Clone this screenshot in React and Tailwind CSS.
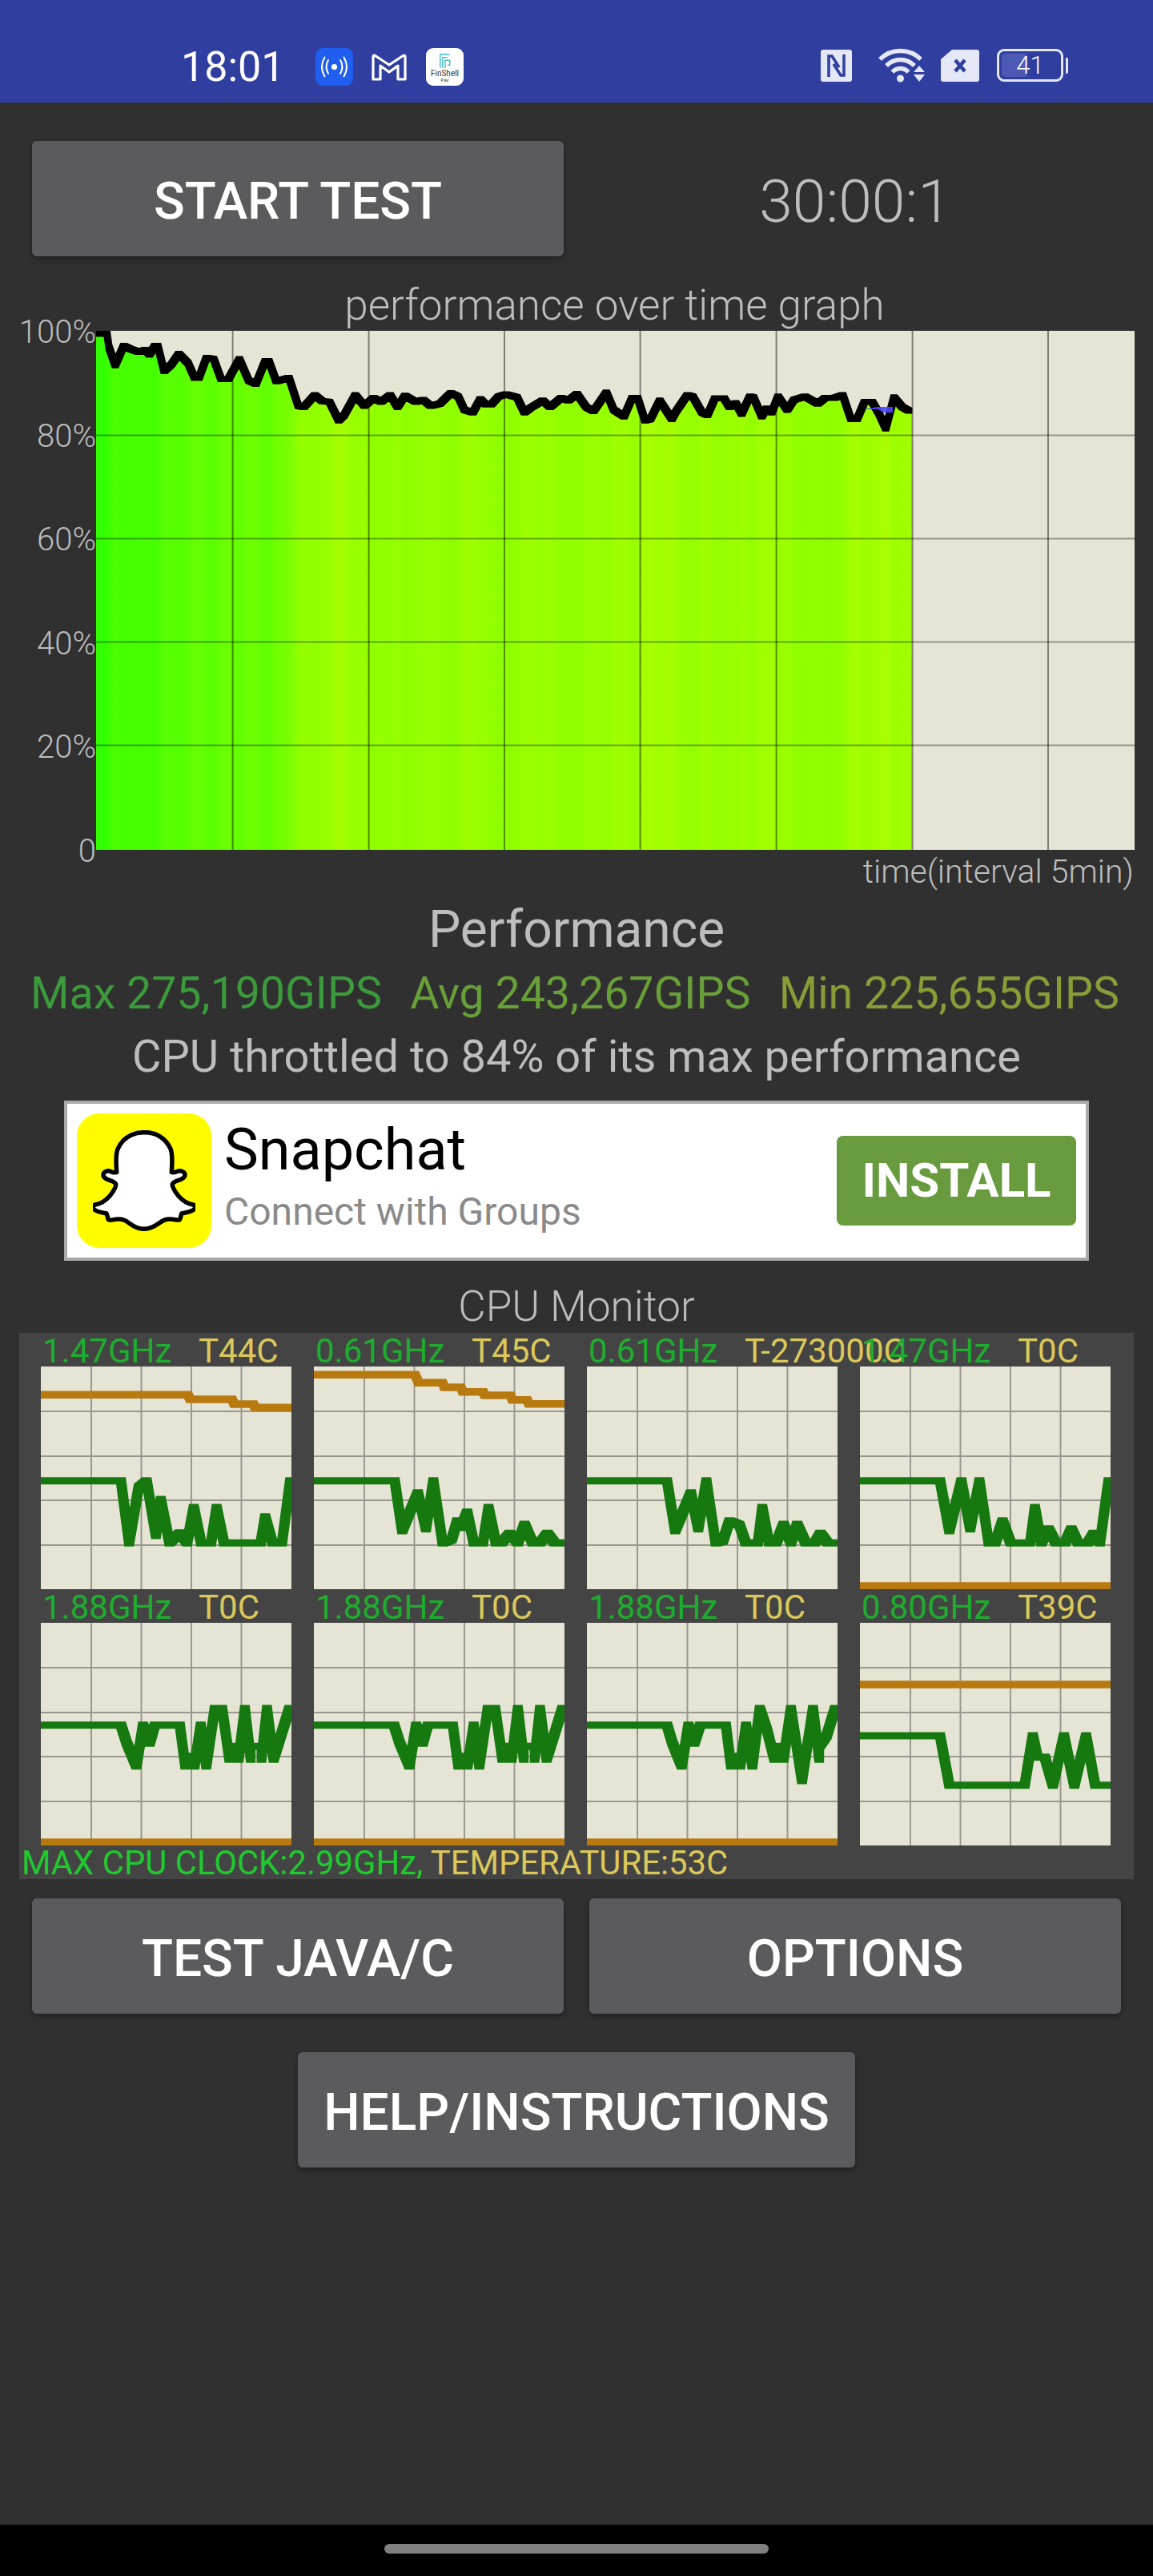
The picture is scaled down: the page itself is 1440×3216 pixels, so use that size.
import React from 'react';
import { FaSnapchatGhost } from 'react-icons/fa';

// performance curve traced off the graph (x in zoomed px, y in zoomed px)
const curveLeft = [[260,110],[290,110],[295,160],[312,228],[335,155],[355,168],[375,178],[395,170],[405,188],[420,155],[428,155],[445,250],[465,225],[485,185],[510,220],[528,275],[540,275],[560,200],[580,205],[600,280],[620,280],[650,205],[675,285],[695,298],[720,212],[730,212],[750,288],[785,275],[810,380],[825,385],[855,340],[875,362],[895,365],[920,435],[935,415],[965,340],[990,380],[1015,350],[1035,365],[1060,340],[1080,385],[1100,342],[1130,365],[1150,358],[1170,380],[1195,372],[1225,332],[1245,345],[1262,395],[1285,405],[1305,355],[1320,375],[1335,375],[1355,345],[1375,337],[1405,348],[1425,405],[1445,385],[1475,360],[1495,385],[1525,350],[1545,360]];
const curveRight = [[0,335],[25,385],[45,400],[80,330],[100,395],[128,420],[150,350],[165,350],[185,435],[200,430],[225,360],[258,430],[270,400],[300,340],[315,345],[340,405],[355,415],[375,352],[400,352],[415,385],[432,370],[448,410],[470,345],[480,348],[503,420],[515,390],[530,405],[547,345],[572,395],[590,358],[620,345],[655,372],[675,350],[700,350],[723,340],[745,430],[762,430],[782,365],[803,365],[820,405],[840,465],[862,348],[885,385],[903,398]];

const curve = [
  ...curveLeft.map(([x, y]) => [x / 2.178 - 119.4, y / 3 - 33]),
  ...curveRight.map(([x, y]) => [x / 2.178 + 600.6, y / 3 - 33]),
];

// the app paints with a rectangular brush, so sweep it along each segment
const brush = (pts, hx, hy) =>
  pts.slice(1).map(([x2, y2], i) => {
    const [x1, y1] = pts[i];
    const p = y2 <= y1
      ? [[x1 - hx, y1 - hy], [x2 - hx, y2 - hy], [x2 + hx, y2 - hy], [x2 + hx, y2 + hy], [x1 + hx, y1 + hy], [x1 - hx, y1 + hy]]
      : [[x1 - hx, y1 - hy], [x1 + hx, y1 - hy], [x2 + hx, y2 - hy], [x2 + hx, y2 + hy], [x2 - hx, y2 + hy], [x1 - hx, y1 + hy]];
    return 'M' + p.map((q) => q[0].toFixed(1) + ' ' + q[1].toFixed(1)).join('L') + 'Z';
  }).join('');

// stripes follow the curve, softened a little against the neighbours
const stripeColor = (i) => {
  const near = curve.slice(Math.max(0, i - 2), i + 3);
  const avg = near.reduce((sum, p) => sum + p[1], 0) / near.length;
  const y = avg * 0.55 + curve[i][1] * 0.45;
  const perf = 100 - (y - 1) / 6.48;
  const r = Math.min(200, Math.round(40 + (100 - perf) * 8));
  return `rgb(${r},255,0)`;
};

const FILL_END = 1019;

const PerfGraph = () => (
  <svg viewBox="0 0 1297 648" className="block h-[648px] w-[1297px] bg-[#e6e5d5]">
    <defs>
      <linearGradient id="stripes" gradientUnits="userSpaceOnUse" x1="0" y1="0" x2={FILL_END} y2="0">
        {curve.map(([x], i) => (
          <stop key={i} offset={Math.max(0, x / FILL_END)} stopColor={stripeColor(i)} />
        ))}
      </linearGradient>
    </defs>
    <path
      fill="url(#stripes)"
      d={'M0 648L0 0L' + curve.map(([x, y]) => x.toFixed(1) + ' ' + y.toFixed(1)).join('L') + `L${FILL_END} ${curve[curve.length - 1][1]}L${FILL_END} 648Z`}
    />
    {[170.6, 340.6, 510, 679.6, 849.6, 1019.6, 1189].map((x) => (
      <line key={x} x1={x} x2={x} y1="0" y2="648" stroke="#000" strokeOpacity="0.45" strokeWidth="2" />
    ))}
    {[130.6, 259.6, 388.6, 517.6].map((y) => (
      <line key={y} x1="0" x2="1297" y1={y} y2={y} stroke="#000" strokeOpacity="0.35" strokeWidth="2" />
    ))}
    <path d={brush(curve, 4.2, 3.8)} fill="#000" />
    <path d="M958 98H976L984 102H995V95H976Z" fill="#4a4aff" fillOpacity="0.9" />
  </svg>
);

// CPU plots, traced in zoomed px relative to the plot corner
const shift = (pts, x0) => pts.map(([x, y]) => [(x - x0) / 2.178, (y - 197) / 3]);

const row2a = [[112,580],[330,580],[345,645],[372,733],[390,580],[408,648],[422,580],[490,580],[505,733],[505,697],[530,697],[530,733],[547,580],[562,733],[585,518],[605,518],[625,708],[625,660],[650,660],[650,708],[667,518],[683,708],[683,660],[712,660],[712,708],[727,518],[745,708],[765,620],[788,518]];
const BOTTOM_TEMP = [[0, 274], [313, 274]];

const cpus = [
  {
    freq: '1.47GHz', temp: 'T44C',
    green: shift([[112,625],[330,625],[352,858],[378,650],[400,625],[425,830],[438,695],[462,858],[490,820],[510,858],[528,725],[548,858],[575,858],[590,725],[610,858],[710,858],[722,760],[742,858],[768,858],[790,625]], 112),
    orange: shift([[112,303],[512,303],[518,320],[632,320],[638,338],[690,338],[695,351],[795,351]], 112),
  },
  {
    freq: '0.61GHz', temp: 'T45C',
    green: shift([[855,625],[1075,625],[1095,812],[1138,670],[1160,805],[1180,625],[1205,858],[1230,845],[1245,775],[1255,800],[1272,742],[1290,858],[1315,858],[1330,725],[1350,858],[1365,858],[1388,822],[1410,858],[1428,788],[1450,858],[1470,858],[1490,822],[1510,858],[1538,858]], 855),
    orange: shift([[855,228],[1130,228],[1140,258],[1205,258],[1210,275],[1255,275],[1260,292],[1315,292],[1320,305],[1390,305],[1395,322],[1435,322],[1440,337],[1538,337]], 855),
  },
  {
    freq: '0.61GHz', temp: 'T-273000C',
    green: shift([[30,625],[248,625],[270,812],[313,670],[333,805],[355,625],[380,858],[400,850],[418,775],[445,790],[462,858],[495,858],[507,725],[525,858],[545,858],[565,788],[585,858],[602,788],[625,858],[650,858],[665,822],[685,858],[712,858]], 30),
    orange: null,
  },
  {
    freq: '1.47GHz', temp: 'T0C',
    green: shift([[772,625],[990,625],[1015,812],[1048,625],[1072,805],[1097,625],[1122,858],[1140,858],[1160,775],[1182,858],[1235,858],[1248,725],[1265,858],[1285,805],[1305,858],[1330,858],[1347,805],[1365,858],[1392,858],[1408,822],[1425,858],[1448,625]], 772),
    orange: BOTTOM_TEMP,
  },
  { freq: '1.88GHz', temp: 'T0C', green: shift(row2a, 112), orange: BOTTOM_TEMP },
  { freq: '1.88GHz', temp: 'T0C', green: shift(row2a, 112), orange: BOTTOM_TEMP },
  {
    freq: '1.88GHz', temp: 'T0C',
    green: shift([[30,580],[248,580],[262,645],[288,733],[306,580],[322,648],[338,580],[408,580],[422,733],[422,697],[447,697],[447,733],[463,580],[480,733],[500,518],[520,600],[540,708],[540,660],[565,660],[565,708],[585,518],[615,788],[645,518],[662,708],[662,660],[682,620],[705,518]], 30),
    orange: BOTTOM_TEMP,
  },
  {
    freq: '0.80GHz', temp: 'T39C',
    green: shift([[772,620],[990,620],[1015,805],[1220,805],[1242,620],[1255,700],[1275,700],[1297,805],[1327,620],[1355,805],[1387,620],[1412,805],[1455,805]], 772),
    orange: [[0, 77], [313, 77]],
  },
];

const CpuCell = ({ freq, temp, green, orange }) => (
  <div>
    <div className="flex h-[42px] items-center whitespace-nowrap pt-[3px] text-[42px] leading-[42px]">
      <span className="ml-[2px] w-[195px] shrink-0 text-[#1ead2e]">{freq}</span>
      <span className="text-[#dcc85a]">{temp}</span>
    </div>
    <svg viewBox="0 0 313 278" className="block h-[278px] w-[313px] bg-[#e6e5d5]">
      {[63, 125.5, 188, 250.5].map((x) => (
        <line key={x} x1={x} x2={x} y1="0" y2="278" stroke="#98988f" strokeWidth="2" />
      ))}
      {[56, 112, 167, 223].map((y) => (
        <line key={y} x1="0" x2="313" y1={y} y2={y} stroke="#98988f" strokeWidth="2" />
      ))}
      {orange && <path d={brush(orange, 4.8, 4.8)} fill="#b8790f" />}
      <path d={brush(green, 6, 4.5)} fill="#16790f" />
    </svg>
  </div>
);

const ActionButton = ({ label, className }) => (
  <button className={'h-[144px] rounded-[6px] bg-[#5b5b5d] pt-[7px] text-[64px] font-medium leading-none text-white shadow-[0_3px_6px_rgba(0,0,0,0.35)] ' + className}>
    {label}
  </button>
);

const StatusBar = () => (
  <div className="flex h-[128px] items-start justify-between bg-[#303f9f] pl-[226px] pr-[106px] pt-[60px]">
    <div className="flex items-center">
      <span className="w-[168px] text-[52px] leading-[47px] text-white">18:01</span>
      <svg viewBox="0 0 47 47" className="h-[47px] w-[47px]">
        <rect width="47" height="47" rx="9" fill="#1f5eef" />
        <circle cx="23.5" cy="23.5" r="3.6" fill="#fff" />
        <path d="M16 15q-5 8.500 0 17M31 15q5 8.500 0 17M11.500 11.500q-7 12 0 24M35.500 11.500q7 12 0 24" fill="none" stroke="#fff" strokeWidth="2" strokeLinecap="round" />
      </svg>
      <svg viewBox="0 0 44 36" className="ml-[23px] h-[36px] w-[44px]">
        <path d="M2 33V5q0-2.500 2.500-1.500L22 15 39.500 3.500Q42 2.500 42 5v28H33V16L22 24 11 16v17Z" fill="none" stroke="#fff" strokeWidth="3.200" strokeLinejoin="round" />
      </svg>
      <div className="ml-[24px] flex h-[47px] w-[47px] flex-col items-center rounded-[9px] bg-white pt-[6px]">
        <svg viewBox="0 0 18 22" className="h-[20px] w-[16px]">
          <path d="M2 21V2h13M5.500 21V6H12M9 21V10h6.500v7H12" fill="none" stroke="#2fb9c4" strokeWidth="1.500" />
        </svg>
        <span className="mt-[1px] text-[10px] leading-[10px] text-[#333]">FinShell</span>
        <span className="text-[6px] leading-[6px] text-[#333]">Pay</span>
      </div>
    </div>
    <div className="flex items-center">
      <svg viewBox="0 0 39 40" className="h-[40px] w-[39px]">
        <rect width="39" height="40" rx="3" fill="#e4e7f6" />
        <path d="M10 34V8h4l9 14M29 6v26h-4l-9-14" fill="none" stroke="#303f9f" strokeWidth="3.500" />
      </svg>
      <svg viewBox="0 0 60 43" className="ml-[33px] h-[43px] w-[60px]">
        <path d="M2 14C16 0 39 0 53 14" fill="none" stroke="#e4e7f6" strokeWidth="5.500" />
        <path d="M10 22C20 12 35 12 45 22" fill="none" stroke="#e4e7f6" strokeWidth="5.500" />
        <path d="M17.500 30C23 24 32 24 37.500 30" fill="none" stroke="#e4e7f6" strokeWidth="5.500" />
        <circle cx="27.500" cy="38" r="4.500" fill="#e4e7f6" />
        <path d="M51 22l7 8H44ZM44 33h14l-7 9Z" fill="#e4e7f6" />
      </svg>
      <svg viewBox="0 0 48 40" className="ml-[18px] h-[40px] w-[48px]">
        <path d="M14 0H45q3 0 3 3v34q0 3-3 3H3q-3 0-3-3V12Z" fill="#e4e7f6" />
        <path d="M18 13l12 14M30 13L18 27" stroke="#303f9f" strokeWidth="4.500" />
      </svg>
      <div className="relative ml-[22px] flex h-[41px] w-[83px] items-center justify-center overflow-hidden rounded-[9px] border-[3px] border-[#e4e7f6]">
        <div className="absolute inset-y-[3px] left-[3px] w-[31px] rounded-l-[5px] bg-[#4c5ab5]" />
        <span className="relative text-[31px] font-light leading-none text-white">41</span>
      </div>
      <div className="ml-[3px] h-[20px] w-[3px] rounded-r-[2px] bg-[#e4e7f6]" />
    </div>
  </div>
);

const App = () => (
  <div className="flex h-[3216px] w-[1440px] flex-col bg-[#303030] font-['Roboto',sans-serif] text-[#bdbdbd]">
    <StatusBar />

    <div className="mt-[48px] flex items-center px-[40px]">
      <ActionButton label="START TEST" className="w-[664px]" />
      <div className="ml-[32px] w-[664px] pt-[7px] text-center text-[75px] font-light leading-[137px]">30:00:1</div>
    </div>

    <div className="ml-[119px] mt-[30px] w-[1297px] text-center text-[53px] font-light leading-[63px]">performance over time graph</div>

    <div className="flex h-[648px]">
      <div className="-mt-[24px] flex h-[700px] w-[120px] shrink-0 flex-col justify-between text-right text-[40px] font-light leading-[52px]">
        <span>100%</span>
        <span>80%</span>
        <span>60%</span>
        <span>40%</span>
        <span>20%</span>
        <span>0</span>
      </div>
      <PerfGraph />
    </div>

    <div className="mt-[5px] pr-[24px] text-right text-[41px] font-light leading-[44px]">time(interval 5min)</div>

    <div className="mt-[15px] text-center text-[64px] leading-[72px]">Performance</div>

    <div className="mt-[16px] flex justify-between whitespace-nowrap pl-[38px] pr-[42px] text-[55.5px] leading-[56px]">
      <span className="text-[#3b9a3b]">Max 275,190GIPS</span>
      <span className="text-[#689f38]">Avg 243,267GIPS</span>
      <span className="text-[#879e37]">Min 225,655GIPS</span>
    </div>

    <div className="mt-[20px] text-center text-[56px] leading-[60px]">CPU throttled to 84% of its max performance</div>

    <div className="mx-[80px] mt-[25px] flex h-[200px] items-center border-4 border-[#a8a8a8] bg-white pl-[12px] pr-[12px]">
      <div className="flex h-[168px] w-[168px] shrink-0 items-center justify-center rounded-[28px] bg-[#fffc00]">
        <FaSnapchatGhost size={128} fill="#fff" stroke="#000" strokeWidth={22} />
      </div>
      <div className="ml-[16px] flex -translate-y-[4px] flex-col">
        <span className="-mt-[4px] text-[72px] leading-[80px] text-black">Snapchat</span>
        <span className="mt-[10px] text-[48px] leading-[54px] text-[#8a8a8a]">Connect with Groups</span>
      </div>
      <div className="ml-auto flex h-[112px] w-[299px] items-center justify-center rounded-[8px] bg-[#689a3e] text-[60px] font-bold text-white">INSTALL</div>
    </div>

    <div className="mt-[29px] text-center text-[53px] font-light leading-[56px]">CPU Monitor</div>

    <div className="mx-[24px] mt-[5px] h-[682px] bg-[#444444] pl-[27px]">
      <div className="grid grid-cols-[repeat(4,313px)] gap-x-[28px]">
        {cpus.map((c, i) => (
          <CpuCell key={i} {...c} />
        ))}
      </div>
      <div className="-ml-[24px] whitespace-nowrap pt-[2px] text-[41.8px] leading-[40px]">
        <span className="text-[#1fc92e]">MAX CPU CLOCK:2.99GHz, </span>
        <span className="text-[#dcc85a]">TEMPERATURE:53C</span>
      </div>
    </div>

    <div className="mt-[24px] flex gap-[32px] px-[40px]">
      <ActionButton label="TEST JAVA/C" className="w-[664px]" />
      <ActionButton label="OPTIONS" className="w-[664px]" />
    </div>

    <div className="mt-[48px] flex justify-center">
      <ActionButton label="HELP/INSTRUCTIONS" className="w-[696px]" />
    </div>

    <div className="mt-auto flex h-[64px] justify-center bg-black pt-[24px]">
      <div className="h-[12px] w-[480px] rounded-full bg-[#808080]" />
    </div>
  </div>
);

export default App;
